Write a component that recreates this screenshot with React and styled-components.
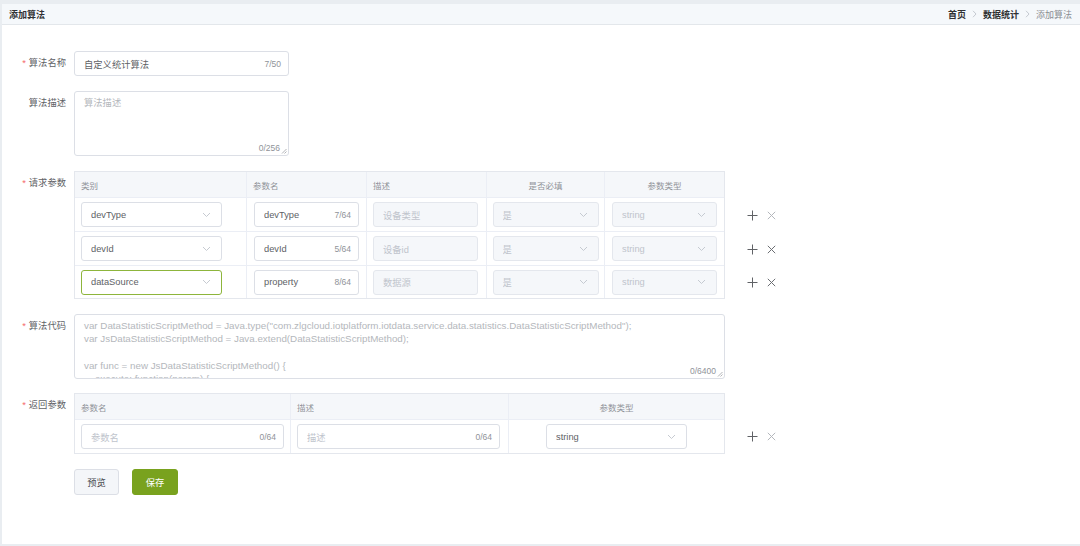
import React from "react";
import styled, { createGlobalStyle } from "styled-components";

const Global = createGlobalStyle`
  html, body { margin: 0; padding: 0; }
  body {
    font-family: "Liberation Sans", "Noto Sans CJK SC", sans-serif;
    background: #e9edf1;
  }
  * { box-sizing: border-box; }
`;

const Page = styled.div`
  width: 1080px;
  height: 546px;
  padding: 4px 0 2px 2px;
  background: #e9edf1;
  overflow: hidden;
`;

const Panel = styled.div`
  height: 100%;
  background: #fff;
  display: flex;
  flex-direction: column;
`;

const Header = styled.div`
  height: 21px;
  flex: none;
  background: #f5f8fb;
  border-bottom: 1px solid #e3e7eb;
  display: flex;
  align-items: center;
  justify-content: space-between;
  padding: 0 8px 0 7px;
`;

const Title = styled.div`
  font-size: 9px;
  font-weight: bold;
  color: #303133;
`;

const Crumbs = styled.div`
  display: flex;
  align-items: center;
  gap: 6px;
  font-size: 9px;
`;

const Crumb = styled.span`
  color: ${(p) => (p.$current ? "#8a8d92" : "#303133")};
  font-weight: ${(p) => (p.$current ? "normal" : "bold")};
`;

const Sep = styled.svg`
  display: block;
`;

const Form = styled.div`
  padding-top: 26px;
  display: flex;
  flex-direction: column;
`;

const Row = styled.div`
  display: flex;
  align-items: flex-start;
  margin-bottom: ${(p) => p.$mb ?? 15}px;
`;

const Label = styled.div`
  width: 72px;
  flex: none;
  padding-right: 8px;
  text-align: right;
  font-size: 9.3px;
  line-height: 25px;
  color: #606266;
`;

const Star = styled.span`
  color: #f56c6c;
  margin-right: 3px;
`;

const InputBox = styled.div`
  width: ${(p) => p.$w}px;
  height: 25px;
  border: 1px solid ${(p) => (p.$focus ? "#8db53c" : p.$disabled ? "#e4e7ed" : "#dcdfe6")};
  background: ${(p) => (p.$disabled ? "#f5f7fa" : "#fff")};
  border-radius: 3px;
  display: flex;
  align-items: center;
  padding: 0 ${(p) => (p.$select ? 10 : 7)}px 0 9px;
  flex: none;
`;

const InputText = styled.span`
  flex: 1;
  font-size: 9.3px;
  color: ${(p) => (p.$muted ? "#c0c4cc" : "#606266")};
  white-space: nowrap;
  overflow: hidden;
`;

const Count = styled.span`
  font-size: 8.5px;
  color: #909399;
`;

const TextArea = styled.div`
  position: relative;
  width: ${(p) => p.$w}px;
  height: 65px;
  border: 1px solid #dcdfe6;
  border-radius: 3px;
  padding: ${(p) => p.$pt ?? 5}px 9px;
  overflow: hidden;
`;

const Placeholder = styled.div`
  font-size: ${(p) => p.$size ?? 9.3}px;
  line-height: 13.3px;
  color: #b4b7bc;
  white-space: pre;
`;

const AreaCount = styled.span`
  position: absolute;
  right: 5px;
  bottom: 2px;
  font-size: 8.5px;
  color: #909399;
  background: #fff;
  padding-right: 3px;
`;

const Grip = styled.svg`
  position: absolute;
  right: 1px;
  bottom: 1px;
`;

const Table = styled.div`
  width: 651px;
  border: 1px solid #e4e7ed;
  display: grid;
  grid-template-columns: ${(p) => p.$cols};
`;

const Th = styled.div`
  height: 26px;
  background: #f5f7fa;
  border-bottom: 1px solid #ebeef5;
  border-right: ${(p) => (p.$last ? "none" : "1px solid #ebeef5")};
  display: flex;
  align-items: center;
  justify-content: ${(p) => (p.$center ? "center" : "flex-start")};
  padding: 0 6px;
  font-size: 8.5px;
  color: #909399;
`;

const Td = styled.div`
  height: ${(p) => (p.$lastRow ? 32 : 34)}px;
  border-bottom: ${(p) => (p.$lastRow ? "none" : "1px solid #ebeef5")};
  border-right: ${(p) => (p.$last ? "none" : "1px solid #ebeef5")};
  display: flex;
  align-items: center;
  justify-content: ${(p) => (p.$center ? "center" : "flex-start")};
  padding: 0 ${(p) => p.$pl ?? 6}px;
`;

const TableWrap = styled.div`
  display: flex;
  align-items: flex-start;
`;

const Ops = styled.div`
  display: flex;
  flex-direction: column;
  padding-top: 27px;
  margin-left: 22px;
`;

const OpRow = styled.div`
  height: ${(p) => p.$h ?? 34}px;
  display: flex;
  align-items: center;
  gap: 9px;
`;

const Buttons = styled.div`
  display: flex;
  gap: 13px;
  padding-left: 72px;
`;

const Button = styled.button`
  height: 26px;
  width: ${(p) => p.$w}px;
  border-radius: 3px;
  font-family: inherit;
  font-size: 9.3px;
  border: 1px solid ${(p) => (p.$primary ? "#79a21e" : "#dcdfe6")};
  background: ${(p) => (p.$primary ? "#79a21e" : "#f4f6f9")};
  color: ${(p) => (p.$primary ? "#fff" : "#4a4d52")};
  padding: 0;
`;

const Chevron = () => (
  <svg width="9" height="6" viewBox="0 0 9 6">
    <polyline points="1,1 4.5,4.5 8,1" fill="none" stroke="#c0c4cc" strokeWidth="0.9" />
  </svg>
);

const CrumbSep = () => (
  <Sep width="5" height="8" viewBox="0 0 5 8">
    <polyline points="1,0.8 4,4 1,7.2" fill="none" stroke="#c0c4cc" strokeWidth="0.9" />
  </Sep>
);

const PlusIcon = () => (
  <svg width="11" height="11" viewBox="0 0 11 11">
    <path d="M5.5 0.5V10.5M0.5 5.5H10.5" stroke="#606266" strokeWidth="1" />
  </svg>
);

const CloseIcon = ({ light }) => (
  <svg width="9" height="9" viewBox="0 0 9 9">
    <path d="M0.8 0.8L8.2 8.2M8.2 0.8L0.8 8.2" stroke={light ? "#b4b7bc" : "#6b6e73"} strokeWidth="1" />
  </svg>
);

const Select = ({ w, value, disabled, focus }) => (
  <InputBox $w={w} $disabled={disabled} $focus={focus} $select>
    <InputText $muted={disabled}>{value}</InputText>
    <Chevron />
  </InputBox>
);

const Input = ({ w, value, count, disabled, placeholder }) => (
  <InputBox $w={w} $disabled={disabled}>
    <InputText $muted={disabled || !!placeholder}>{value || placeholder}</InputText>
    {count && <Count>{count}</Count>}
  </InputBox>
);

const reqRows = [
  { type: "devType", name: "devType", count: "7/64", desc: "设备类型", lightX: true },
  { type: "devId", name: "devId", count: "5/64", desc: "设备id" },
  { type: "dataSource", name: "property", count: "8/64", desc: "数据源", focus: true },
];

const code = `var DataStatisticScriptMethod = Java.type("com.zlgcloud.iotplatform.iotdata.service.data.statistics.DataStatisticScriptMethod");
var JsDataStatisticScriptMethod = Java.extend(DataStatisticScriptMethod);

var func = new JsDataStatisticScriptMethod() {
    execute: function(param) {`;

const ResizeGrip = () => (
  <Grip width="6" height="6" viewBox="0 0 6 6">
    <path d="M5.5 1L1 5.5M5.5 3.5L3.5 5.5" stroke="#909399" strokeWidth="0.7" />
  </Grip>
);

export default function App() {
  return (
    <>
      <Global />
      <Page>
        <Panel>
          <Header>
            <Title>添加算法</Title>
            <Crumbs>
              <Crumb>首页</Crumb>
              <CrumbSep />
              <Crumb>数据统计</Crumb>
              <CrumbSep />
              <Crumb $current>添加算法</Crumb>
            </Crumbs>
          </Header>
          <Form>
            <Row>
              <Label><Star>*</Star>算法名称</Label>
              <Input w={215} value="自定义统计算法" count="7/50" />
            </Row>
            <Row>
              <Label>算法描述</Label>
              <TextArea $w={215}>
                <Placeholder>算法描述</Placeholder>
                <AreaCount>0/256</AreaCount>
                <ResizeGrip />
              </TextArea>
            </Row>
            <Row>
              <Label><Star>*</Star>请求参数</Label>
              <TableWrap>
                <Table $cols="172px 120px 120px 118px 1fr">
                  <Th>类别</Th>
                  <Th>参数名</Th>
                  <Th>描述</Th>
                  <Th $center>是否必填</Th>
                  <Th $center $last>参数类型</Th>
                  {reqRows.map((r, i) => {
                    const lr = i === reqRows.length - 1;
                    return (
                      <React.Fragment key={i}>
                        <Td $lastRow={lr}><Select w={141} value={r.type} focus={r.focus} /></Td>
                        <Td $lastRow={lr} $pl={7}><Input w={105} value={r.name} count={r.count} /></Td>
                        <Td $lastRow={lr}><Input w={105} value={r.desc} disabled /></Td>
                        <Td $lastRow={lr} $center><Select w={106} value="是" disabled /></Td>
                        <Td $lastRow={lr} $center $last><Select w={105} value="string" disabled /></Td>
                      </React.Fragment>
                    );
                  })}
                </Table>
                <Ops>
                  {reqRows.map((r, i) => (
                    <OpRow key={i} $h={i === 2 ? 32 : 34}>
                      <PlusIcon />
                      <CloseIcon light={r.lightX} />
                    </OpRow>
                  ))}
                </Ops>
              </TableWrap>
            </Row>
            <Row $mb={14}>
              <Label><Star>*</Star>算法代码</Label>
              <TextArea $w={651} $pt={4}>
                <Placeholder $size={9.8}>{code}</Placeholder>
                <AreaCount>0/6400</AreaCount>
                <ResizeGrip />
              </TextArea>
            </Row>
            <Row>
              <Label><Star>*</Star>返回参数</Label>
              <TableWrap>
                <Table $cols="216px 218px 1fr">
                  <Th>参数名</Th>
                  <Th>描述</Th>
                  <Th $center $last>参数类型</Th>
                  <Td $lastRow style={{ height: 33 }}><Input w={203} placeholder="参数名" count="0/64" /></Td>
                  <Td $lastRow style={{ height: 33 }}><Input w={203} placeholder="描述" count="0/64" /></Td>
                  <Td $lastRow $center $last style={{ height: 33 }}><Select w={141} value="string" /></Td>
                </Table>
                <Ops>
                  <OpRow $h={33}>
                    <PlusIcon />
                    <CloseIcon light />
                  </OpRow>
                </Ops>
              </TableWrap>
            </Row>
            <Buttons>
              <Button $w={45}>预览</Button>
              <Button $w={46} $primary>保存</Button>
            </Buttons>
          </Form>
        </Panel>
      </Page>
    </>
  );
}
